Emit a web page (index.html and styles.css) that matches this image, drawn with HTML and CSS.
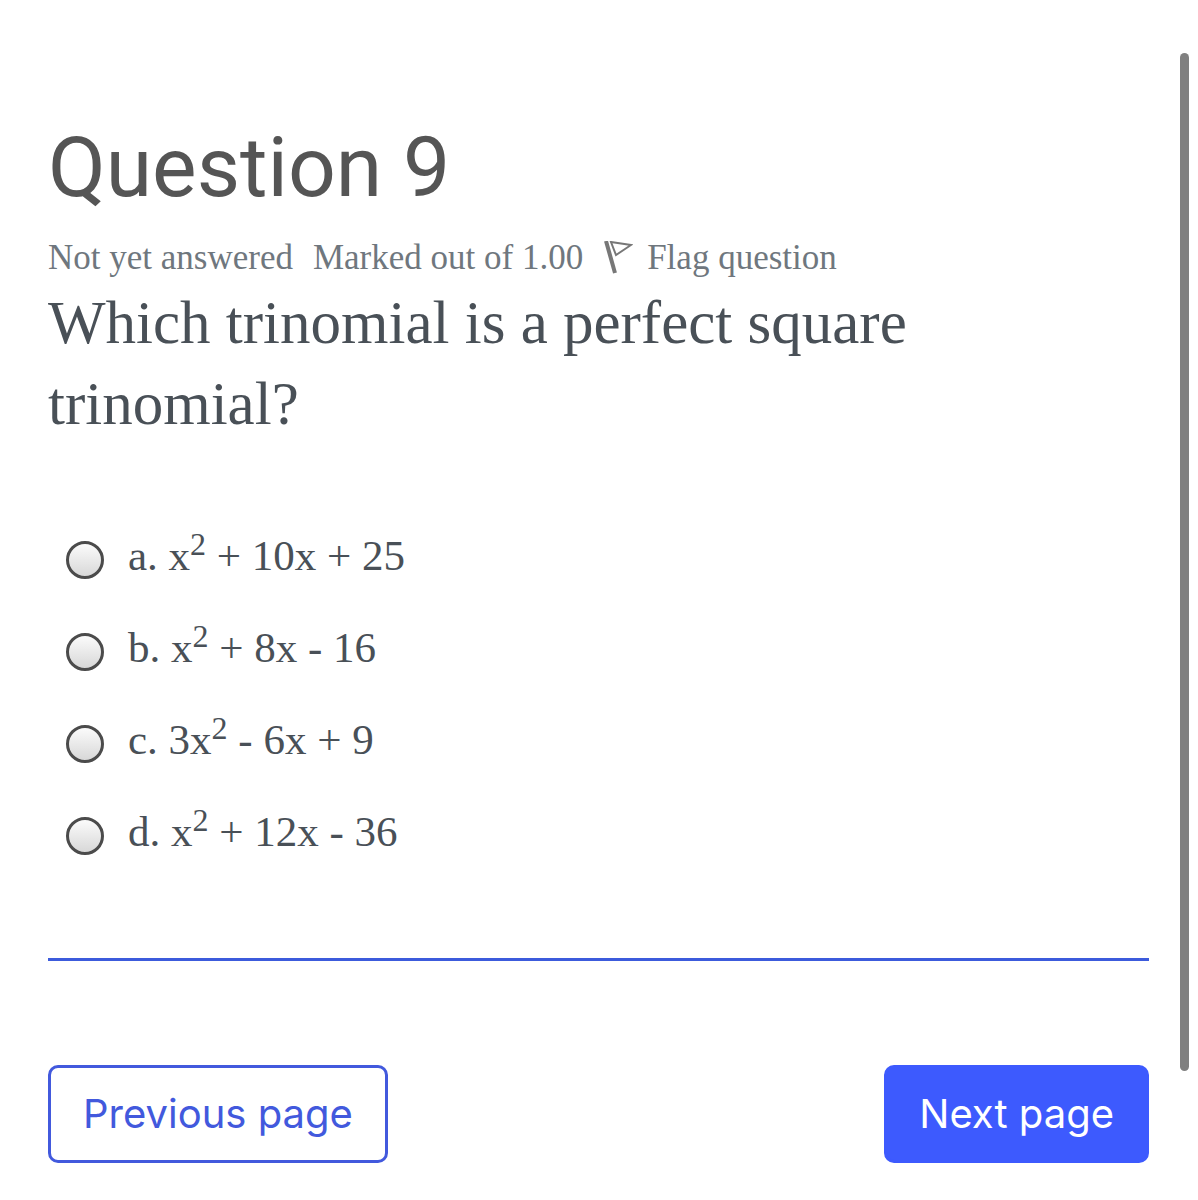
FILE: index.html
```
<!DOCTYPE html>
<html lang="en">
<head>
    <meta charset="UTF-8">
    <meta name="viewport" content="width=device-width, initial-scale=1.0">
    <title>Question 9</title>
    <link rel="stylesheet" href="styles.css">
</head>
<body>
    <main class="quiz-page">
        <h1 class="question-title">Question 9</h1>
        <div class="question-info">
            <span>Not yet answered</span>
            <span>Marked out of 1.00</span>
            <a class="flag-link" href="#">
                <svg class="flag-icon" viewBox="0 0 30 34" aria-hidden="true">
                    <path d="M3 0 L12 32" fill="none" stroke="#777" stroke-width="4"/>
                    <path d="M8 1 L28 4 L13 14 Z" fill="#fff" stroke="#777" stroke-width="2"/>
                </svg>
                Flag question
            </a>
        </div>
        <form class="question-form">
            <p class="question-text" id="questionText">Which trinomial is a perfect square trinomial?</p>
            <div class="answers" role="radiogroup" aria-labelledby="questionText">
                <div class="answer">
                    <input type="radio" name="answer" id="answerA" value="a">
                    <label for="answerA">a. x<sup>2</sup> + 10x + 25</label>
                </div>
                <div class="answer">
                    <input type="radio" name="answer" id="answerB" value="b">
                    <label for="answerB">b. x<sup>2</sup> + 8x - 16</label>
                </div>
                <div class="answer">
                    <input type="radio" name="answer" id="answerC" value="c">
                    <label for="answerC">c. 3x<sup>2</sup> - 6x + 9</label>
                </div>
                <div class="answer">
                    <input type="radio" name="answer" id="answerD" value="d">
                    <label for="answerD">d. x<sup>2</sup> + 12x - 36</label>
                </div>
            </div>
            <div class="page-nav">
                <button type="button" class="btn btn-outline">Previous page</button>
                <button type="submit" class="btn btn-primary">Next page</button>
            </div>
        </form>
    </main>
    <div class="scroll-thumb"></div>
</body>
</html>
```
FILE: styles.css
```
* {
    margin: 0;
    padding: 0;
    box-sizing: border-box;
}

body {
    font-family: Georgia, "Liberation Serif", serif;
    background-color: #fff;
    color: #495057;
}

.quiz-page {
    padding: 118px 49px 36px 48px;
}

/* Question header */
.question-title {
    font-family: Roboto, sans-serif;
    font-size: 84px;
    font-weight: 400;
    line-height: 100px;
    color: #555;
}

.question-info {
    display: flex;
    align-items: center;
    gap: 20px;
    margin-top: 18px;
    font-size: 35px;
    line-height: 44px;
    color: #6f777e;
}

.flag-link {
    display: flex;
    align-items: center;
    gap: 14px;
    color: inherit;
    text-decoration: none;
}

.flag-icon {
    width: 30px;
    height: 34px;
}

.question-text {
    font-size: 61px;
    line-height: 81px;
    margin-top: 2px;
}

/* Answers */
.answers {
    display: flex;
    flex-direction: column;
    gap: 32px;
    margin-top: 82px;
    padding: 0 18px;
}

.answer {
    display: flex;
    align-items: center;
    gap: 24px;
    font-size: 43px;
    line-height: 60px;
}

.answer input {
    appearance: none;
    width: 38px;
    height: 38px;
    margin-top: 8px;
    border: 3px solid #4b4b4b;
    border-radius: 50%;
    background: linear-gradient(#fbfbfb, #d8d8d8);
}

.answer input:checked {
    background: radial-gradient(#4b4b4b 40%, #e8e8e8 45%);
}

.answer sup {
    font-size: 32px;
    line-height: 0;
}

/* Page navigation */
.page-nav {
    display: flex;
    justify-content: space-between;
    margin-top: 96px;
    padding-top: 104px;
    border-top: 3px solid #3c5bdc;
}

.btn {
    padding: 16px 32px;
    font-family: Inter, sans-serif;
    font-size: 40px;
    line-height: 60px;
    border: 3px solid #3d5afe;
    border-radius: 10px;
    cursor: pointer;
}

.btn-outline {
    background: #fff;
    border-color: #4259dd;
    color: #4259dd;
}

.btn-primary {
    background: #3d5afe;
    color: #fff;
}

.scroll-thumb {
    position: fixed;
    top: 53px;
    right: 9px;
    width: 9px;
    height: 1018px;
    border-radius: 5px;
    background: #808080;
}
```
